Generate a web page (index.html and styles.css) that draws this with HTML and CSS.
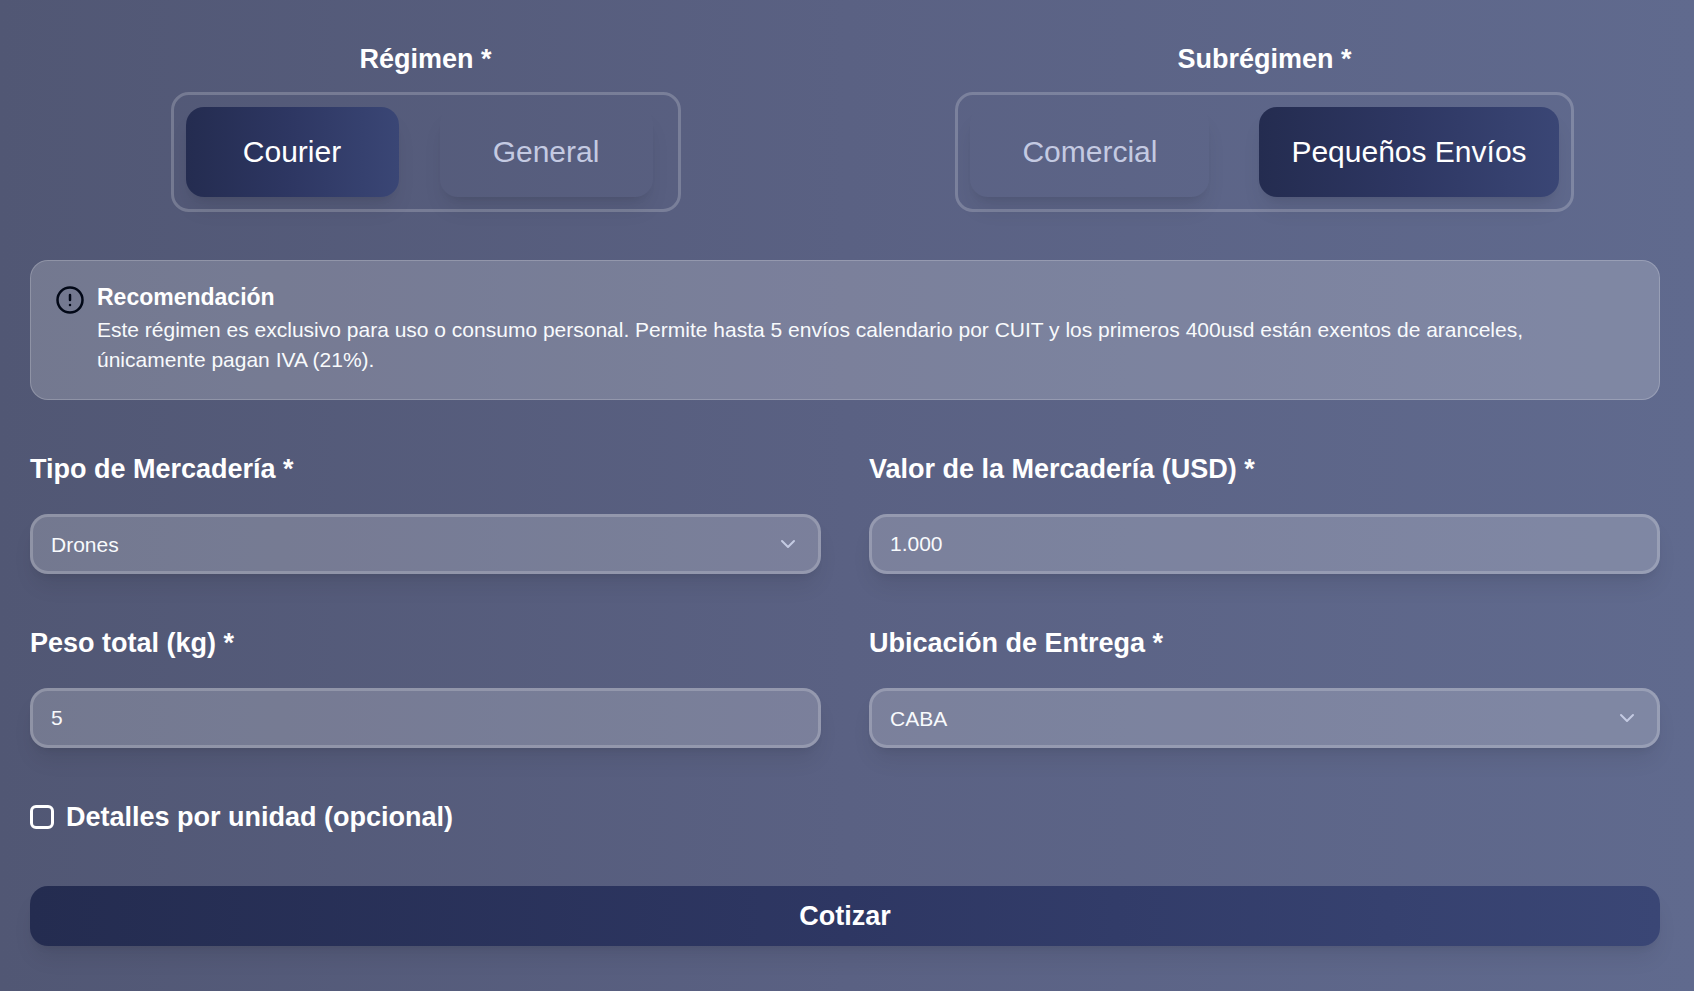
FILE: index.html
```html
<!DOCTYPE html>
<html lang="es">
<head>
    <meta charset="UTF-8">
    <meta name="viewport" content="width=device-width, initial-scale=1.0">
    <title>Cotizador</title>
    <link rel="stylesheet" href="styles.css">
</head>
<body>
    <form class="quote-form">
        <div class="row">
            <div class="regime" role="group" aria-labelledby="regimen-label">
                <h2 class="label" id="regimen-label">Régimen *</h2>
                <div class="toggle">
                    <button type="button" class="option active" aria-pressed="true">Courier</button>
                    <button type="button" class="option" aria-pressed="false">General</button>
                </div>
            </div>
            <div class="regime" role="group" aria-labelledby="subregimen-label">
                <h2 class="label" id="subregimen-label">Subrégimen *</h2>
                <div class="toggle toggle-wide">
                    <button type="button" class="option" aria-pressed="false">Comercial</button>
                    <button type="button" class="option active" aria-pressed="true">Pequeños Envíos</button>
                </div>
            </div>
        </div>

        <div class="alert" role="alert">
            <svg class="alert-icon" viewBox="0 0 24 24" fill="none" stroke="currentColor" stroke-width="2" stroke-linecap="round" stroke-linejoin="round" aria-hidden="true">
                <circle cx="12" cy="12" r="10"/>
                <line x1="12" y1="8" x2="12" y2="12"/>
                <line x1="12" y1="16" x2="12.01" y2="16"/>
            </svg>
            <div class="alert-text">
                <h3>Recomendación</h3>
                <p>Este régimen es exclusivo para uso o consumo personal. Permite hasta 5 envíos calendario por CUIT y los primeros 400usd están exentos de aranceles, únicamente pagan IVA (21%).</p>
            </div>
        </div>

        <div class="row">
            <div class="field">
                <label class="label" for="tipo">Tipo de Mercadería *</label>
                <div class="select">
                    <select class="control" id="tipo">
                        <option>Drones</option>
                    </select>
                    <svg class="chevron" viewBox="0 0 24 24" fill="none" stroke="currentColor" stroke-width="2" stroke-linecap="round" stroke-linejoin="round" aria-hidden="true">
                        <path d="m6 9 6 6 6-6"/>
                    </svg>
                </div>
            </div>
            <div class="field">
                <label class="label" for="valor">Valor de la Mercadería (USD) *</label>
                <input class="control" id="valor" type="text" inputmode="decimal" value="1.000">
            </div>
            <div class="field">
                <label class="label" for="peso">Peso total (kg) *</label>
                <input class="control" id="peso" type="text" inputmode="decimal" value="5">
            </div>
            <div class="field">
                <label class="label" for="ubicacion">Ubicación de Entrega *</label>
                <div class="select">
                    <select class="control" id="ubicacion">
                        <option>CABA</option>
                    </select>
                    <svg class="chevron" viewBox="0 0 24 24" fill="none" stroke="currentColor" stroke-width="2" stroke-linecap="round" stroke-linejoin="round" aria-hidden="true">
                        <path d="m6 9 6 6 6-6"/>
                    </svg>
                </div>
            </div>
        </div>

        <div class="check">
            <input type="checkbox" id="detalles">
            <label class="label" for="detalles">Detalles por unidad (opcional)</label>
        </div>

        <button type="submit" class="submit">Cotizar</button>
    </form>
</body>
</html>
```

FILE: styles.css
```css
* {
    margin: 0;
    padding: 0;
    box-sizing: border-box;
    font-family: Arial, 'Liberation Sans', sans-serif;
}

:root {
    --navy: linear-gradient(to right, #242c50, #2e3763 50%, #3a4675);
    --glass: rgba(255, 255, 255, 0.2);
    --shadow: 0 15px 22px -4px rgba(0, 0, 0, 0.08), 0 6px 9px -6px rgba(0, 0, 0, 0.1);
}

body {
    min-height: 100vh;
    background: linear-gradient(to right, #515774, #5a6183 50%, #606a8e);
    color: #fff;
}

.quote-form {
    display: flex;
    flex-direction: column;
    gap: 48px;
    padding: 38px 34px 44px 30px;
}

.row {
    display: grid;
    grid-template-columns: 1fr 1fr;
    gap: 48px;
}

.label {
    font-size: 27px;
    font-weight: bold;
    line-height: 42px;
}

/* Regime toggles */
.regime {
    display: flex;
    flex-direction: column;
    align-items: center;
    gap: 12px;
}

.toggle {
    display: flex;
    gap: 41px;
    padding: 12px 25px 12px 12px;
    border: 3px solid var(--glass);
    border-radius: 18px;
}

.toggle-wide {
    gap: 50px;
    padding-right: 12px;
}

.option {
    min-width: 213px;
    height: 90px;
    padding: 0 32px;
    border: none;
    border-radius: 18px;
    background: transparent;
    box-shadow: var(--shadow);
    color: #c4cae2;
    font-size: 30px;
    cursor: pointer;
}

.toggle-wide .option {
    min-width: 239px;
}

.option.active {
    background: var(--navy);
    color: #fff;
}

/* Recommendation */
.alert {
    display: flex;
    gap: 12px;
    padding: 24px;
    border: 1px solid var(--glass);
    border-radius: 18px;
    background: var(--glass);
}

.alert-icon {
    flex: none;
    width: 30px;
    height: 30px;
    color: #020817;
}

.alert-text h3 {
    font-size: 23px;
    line-height: 24px;
    margin-bottom: 6px;
}

.alert-text p {
    color: #f8fafc;
    font-size: 21px;
    line-height: 30px;
}

/* Fields */
.field {
    display: flex;
    flex-direction: column;
    gap: 24px;
}

.control {
    display: block;
    width: 100%;
    height: 60px;
    padding: 0 18px;
    border: 3px solid var(--glass);
    border-radius: 18px;
    background: var(--glass);
    box-shadow: var(--shadow);
    color: #f8fafc;
    font-size: 21px;
    appearance: none;
}

.control option {
    color: #242c50;
}

.select {
    position: relative;
}

.chevron {
    position: absolute;
    top: 18px;
    right: 21px;
    width: 24px;
    height: 24px;
    color: #c4cae2;
    pointer-events: none;
}

.check {
    display: flex;
    align-items: center;
    gap: 12px;
}

.check input {
    width: 24px;
    height: 24px;
    border: 3px solid #fff;
    border-radius: 6px;
    appearance: none;
}

.check input:checked {
    background: #3a4675;
}

.submit {
    height: 60px;
    border: none;
    border-radius: 18px;
    background: var(--navy);
    box-shadow: var(--shadow);
    color: #fff;
    font-size: 27px;
    font-weight: bold;
    cursor: pointer;
}
```
